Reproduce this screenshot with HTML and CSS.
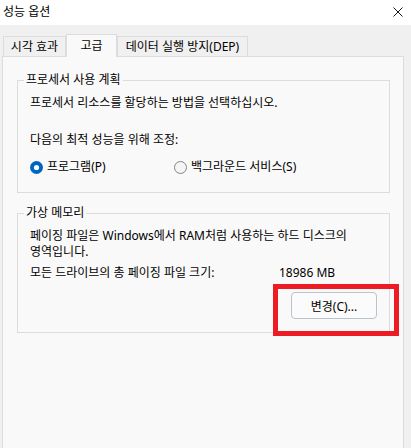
FILE: index.html
```html
<html>

<head>
  <link rel="stylesheet" href="styles.css">
</head>

<body>

  <div class="titlebar">
    <span class="title">성능 옵션</span>
    <svg class="close" width="10" height="10" viewBox="0 0 10 10">
      <path d="M0.5 0.5 L9.5 9.5 M9.5 0.5 L0.5 9.5" stroke="#1a1a1a" stroke-width="1" fill="none" />
    </svg>
  </div>

  <div class="tabs">
    <div class="tab tab-visual">시각 효과</div>
    <div class="tab tab-advanced active">고급</div>
    <div class="tab tab-dep">데이터 실행 방지(DEP)</div>
  </div>

  <div class="panel">
    <fieldset class="group group-cpu">
      <legend>프로세서 사용 계획</legend>
      <p class="text">프로세서 리소스를 할당하는 방법을 선택하십시오.</p>
      <p class="text adjust">다음의 최적 성능을 위해 조정:</p>
      <div class="radios">
        <label class="radio radio-program">
          <svg class="dot" width="13" height="13" viewBox="0 0 13 13">
            <circle cx="6.5" cy="6.5" r="6.5" fill="#0067c0" />
            <circle cx="6.5" cy="6.5" r="2.6" fill="#fff" />
          </svg>
          프로그램(P)
        </label>
        <label class="radio">
          <svg class="dot" width="13" height="13" viewBox="0 0 13 13">
            <circle cx="6.5" cy="6.5" r="6" fill="#f5f5f5" stroke="#858585" stroke-width="1" />
          </svg>
          백그라운드 서비스(S)
        </label>
      </div>
    </fieldset>

    <fieldset class="group group-mem">
      <legend>가상 메모리</legend>
      <p class="text paging">페이징 파일은 Windows에서 RAM처럼 사용하는 하드 디스크의</p>
      <p class="text paging">영역입니다.</p>
      <div class="size-row">
        <span class="size-label">모든 드라이브의 총 페이징 파일 크기:</span>
        <span class="size">18986 MB</span>
      </div>
      <div class="actions">
        <button class="btn">변경(C)...</button>
      </div>
    </fieldset>

    <!-- annotation box over the button -->
    <div class="highlight"></div>
  </div>

</body>

</html>
```

FILE: styles.css
```css
body {
  margin: 0;
  height: 448px;
  overflow: hidden;
  background-color: #f0f0f0;
  color: #000;
  font-family: "Noto Sans", "Noto Sans CJK KR", sans-serif;
  font-size: 12px;
}

.titlebar {
  height: 25px;
  display: flex;
  align-items: center;
  justify-content: space-between;
  background-color: #fff;
  padding-left: 3px;
}

.title {
  line-height: 16px;
  margin-top: -1px;
}

.close {
  margin-right: 8px;
  margin-top: -2px;
}

.tabs {
  display: flex;
  align-items: flex-end;
  margin-top: 9px;
  padding-left: 3px;
}

.tab {
  box-sizing: border-box;
  height: 20px;
  display: flex;
  align-items: center;
  justify-content: center;
  border: 1px solid #dcdcdc;
  border-bottom: none;
  background-color: #f0f0f0;
  line-height: 16px;
  white-space: nowrap;
}

.tab-visual {
  width: 63px;
}

.tab-advanced {
  width: 51px;
}

.tab-dep {
  width: 131px;
}

.tab.active {
  height: 23px;
  margin-bottom: -1px;
  padding-bottom: 1px;
  background-color: #f9f9f9;
  position: relative;
  z-index: 1;
}

.panel {
  position: relative;
  box-sizing: border-box;
  width: 402px;
  height: 392px;
  margin-left: 2px;
  border: 1px solid #dcdcdc;
  border-bottom: none;
  background-color: #f9f9f9;
}

.group {
  box-sizing: border-box;
  width: 373px;
  margin: 15px 0 0 14px;
  padding: 7px 12px 17px 12px;
  border: 1px solid #dcdcdc;
}

.group legend {
  margin-left: -6px;
  padding: 0 2px;
  line-height: 16px;
}

.text {
  margin: 0;
  line-height: 16px;
  white-space: nowrap;
}

.adjust {
  margin-top: 21px;
}

.radios {
  display: flex;
  margin-top: 11px;
  line-height: 16px;
}

.radio {
  display: flex;
  align-items: center;
  gap: 4px;
}

.radio-program {
  width: 144px;
}

.group-mem {
  margin-top: 12px;
  padding-top: 7px;
  padding-bottom: 13px;
}

.size-row {
  display: flex;
  margin-top: 5px;
  line-height: 16px;
}

.size-label {
  width: 249px;
  white-space: nowrap;
}

.actions {
  display: flex;
  justify-content: flex-end;
  margin-top: 11px;
}

.btn {
  box-sizing: border-box;
  width: 86px;
  height: 27px;
  border: 1px solid #b8c3ce;
  border-radius: 4px;
  background-color: #fbfbfb;
  font-family: inherit;
  font-size: 12px;
  color: #000;
  padding: 0;
}

.highlight {
  position: absolute;
  left: 270px;
  top: 227px;
  width: 126px;
  height: 52px;
  box-sizing: border-box;
  border: 5px solid #ed1c24;
}
```
